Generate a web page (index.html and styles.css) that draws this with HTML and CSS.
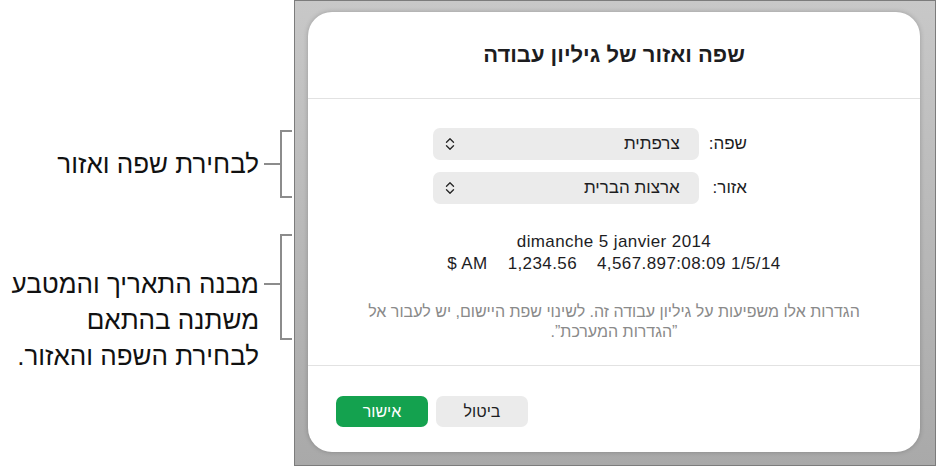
FILE: index.html
```html
<!DOCTYPE html>
<html lang="he">
  <head>
    <meta charset="UTF-8">
    <title>שפה ואזור של גיליון עבודה</title>
    <link rel="stylesheet" href="styles.css">
  </head>
  <body>
    <div class="page">
      <!-- callouts on the left -->
      <aside class="notes">
        <div class="note note-short">
          <p class="note-text" dir="rtl">לבחירת שפה ואזור</p>
          <span class="tick"></span>
          <span class="bracket"></span>
        </div>
        <div class="note note-long">
          <p class="note-text" dir="rtl">מבנה התאריך והמטבע<br>משתנה בהתאם<br>לבחירת השפה והאזור.</p>
          <span class="tick"></span>
          <span class="bracket"></span>
        </div>
      </aside>

      <div class="screen">
        <section class="dialog" dir="rtl">
          <header class="dialog-head">
            <h1>שפה ואזור של גיליון עבודה</h1>
          </header>

          <div class="dialog-body">
            <div class="form">
              <label class="form-label">שפה:</label>
              <div class="popup">
                <span>צרפתית</span>
                <svg class="chevrons" width="10" height="14" viewBox="0 0 10 14"><path d="M1.5 5.2 L5 1.7 L8.5 5.2 M1.5 8.8 L5 12.3 L8.5 8.8" /></svg>
              </div>
              <label class="form-label">אזור:</label>
              <div class="popup">
                <span>ארצות הברית</span>
                <svg class="chevrons" width="10" height="14" viewBox="0 0 10 14"><path d="M1.5 5.2 L5 1.7 L8.5 5.2 M1.5 8.8 L5 12.3 L8.5 8.8" /></svg>
              </div>
            </div>

            <div class="sample" dir="ltr">
              <div class="sample-line">dimanche 5 janvier 2014</div>
              <div class="sample-line sample-row">
                <span>$ AM</span>
                <span>1,234.56</span>
                <span>4,567.897:08:09 1/5/14</span>
              </div>
            </div>

            <p class="hint">הגדרות אלו משפיעות על גיליון עבודה זה. לשינוי שפת היישום, יש לעבור אל<br>”הגדרות המערכת”.</p>
          </div>

          <footer class="dialog-foot">
            <button class="btn">ביטול</button>
            <button class="btn btn-primary">אישור</button>
          </footer>
        </section>
      </div>
    </div>
  </body>
</html>
```

FILE: styles.css
```css
body {
  margin: 0;
  background: white;
  font-family: 'Liberation Sans', 'DejaVu Sans', sans-serif;
  color: #1d1d1f;
}

.page {
  display: flex;
  height: 467px;
}

/* callouts */
.notes {
  width: 294px;
  flex: none;
  padding: 130px 2px 0 0;
  box-sizing: border-box;
  display: flex;
  flex-direction: column;
}

.note {
  display: flex;
  justify-content: flex-end;
}

.note-short {
  align-items: center;
}

.note-long {
  align-items: flex-start;
  margin-top: 36px;
}

.note-text {
  margin: 0 5px 0 0;
  font-size: 26px;
  line-height: 36px;
  color: #111;
  text-align: right;
  white-space: nowrap;
}

.note-long .note-text {
  margin-top: 32px;
}

.tick {
  width: 16px;
  height: 2px;
  background: #8c8c8c;
}

.note-long .tick {
  margin-top: 49px;
}

.bracket {
  width: 12px;
  box-sizing: border-box;
  border: 2px solid #8c8c8c;
  border-right: none;
}

.note-short .bracket {
  height: 68px;
}

.note-long .bracket {
  height: 106px;
}

/* screenshot frame */
.screen {
  width: 642px;
  height: 466px;
  box-sizing: border-box;
  border: 1px solid #7c7c7c;
  background: linear-gradient(#c8c8c8, #a9a9a9);
  padding: 11px 0 0 13px;
}

.dialog {
  width: 612px;
  height: 440px;
  background: white;
  border-radius: 24px;
  box-shadow: 0 0 5px rgba(0, 0, 0, 0.22);
  display: flex;
  flex-direction: column;
  overflow: hidden;
}

.dialog-head {
  height: 86px;
  border-bottom: 1px solid #e2e2e2;
  display: flex;
  align-items: center;
  justify-content: center;
}

.dialog-head h1 {
  margin: 0;
  font-size: 22px;
  font-weight: bold;
}

.dialog-body {
  height: 267px;
  border-bottom: 1px solid #e2e2e2;
  padding-top: 29px;
  box-sizing: border-box;
}

.form {
  display: grid;
  grid-template-columns: auto 266px;
  column-gap: 10px;
  row-gap: 12px;
  justify-content: start;
  align-items: center;
  margin-right: 173px;
}

.form-label {
  font-size: 17px;
}

.popup {
  height: 32px;
  background: #ebebeb;
  border-radius: 7px;
  display: flex;
  align-items: center;
  justify-content: space-between;
  padding: 0 19px 0 12px;
  font-size: 17px;
}

.chevrons {
  fill: none;
  stroke: #2a2a2a;
  stroke-width: 1.4;
  stroke-linecap: round;
  stroke-linejoin: round;
}

.sample {
  margin-top: 27px;
  font-size: 17px;
  letter-spacing: 0.4px;
  line-height: 22px;
  text-align: center;
}

.sample-row {
  display: flex;
  justify-content: center;
  gap: 20px;
}

.hint {
  margin: 27px 0 0;
  font-size: 16px;
  line-height: 20px;
  color: #8a8a8a;
  text-align: center;
}

.dialog-foot {
  flex: 1;
  display: flex;
  justify-content: flex-end;
  align-items: flex-start;
  gap: 8px;
  padding: 30px 28px 0;
}

.btn {
  width: 92px;
  height: 31px;
  border: none;
  border-radius: 7px;
  background: #ebebeb;
  color: #1d1d1f;
  font-family: inherit;
  font-size: 16px;
  padding: 0;
}

.btn-primary {
  background: #14a24f;
  color: white;
}
```
